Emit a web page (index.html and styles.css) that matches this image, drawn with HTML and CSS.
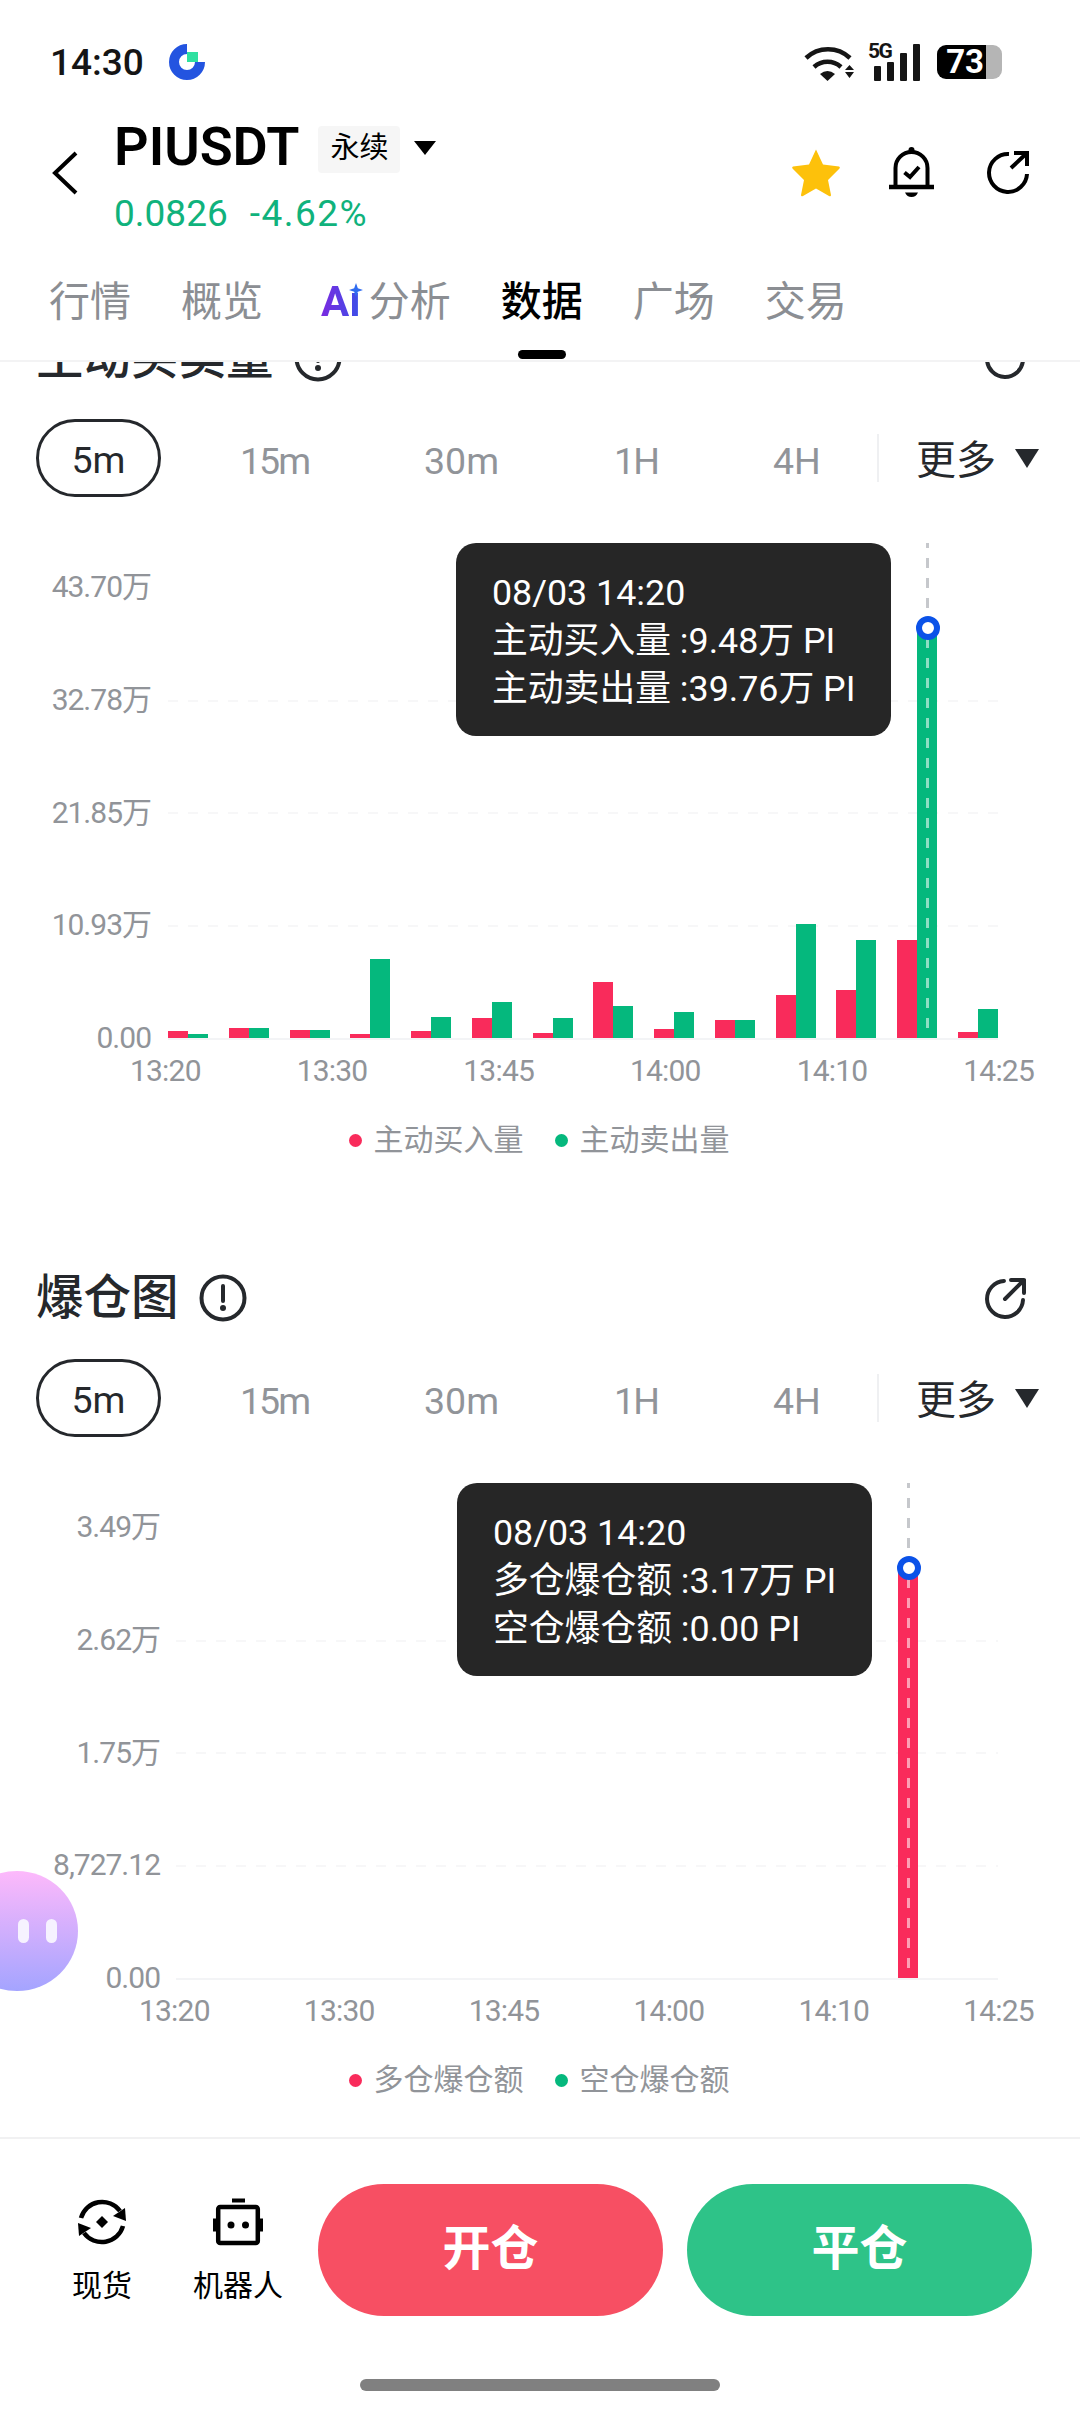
FILE: index.html
```html
<!DOCTYPE html>
<html lang="zh-CN">
<head>
<meta charset="utf-8">
<title>PIUSDT 数据</title>
<link rel="stylesheet" href="styles.css">
</head>
<body>
<div class="top">
  <div class="status">
    <span class="clock">14:30</span>
    <svg class="logo" width="36" height="36" viewBox="0 0 36 36"><path d="M18 5A13 13 0 1 0 31 18" fill="none" stroke="#2354e0" stroke-width="10"/><rect x="18" y="8" width="11" height="10" fill="#2fe0a0"/></svg>
    <div class="status-right">
      <svg width="50" height="38" viewBox="0 0 50 38"><path d="M2 15A32 32 0 0 1 46 15M10 24A20 20 0 0 1 37 24" fill="none" stroke="#151515" stroke-width="4.5"/><path d="M16 31Q23.5 25 31 31L23.5 38Z" fill="#151515"/><path d="M41 27L45.5 22L50 27ZM41 29H50L45.5 35Z" fill="#151515"/></svg>
      <div class="signal">
        <span class="five-g">5G</span>
        <svg width="46" height="37" viewBox="0 0 46 37"><rect y="22" width="7" height="15" rx="1"/><rect x="13" y="18" width="7" height="19" rx="1"/><rect x="26" y="9" width="7" height="28" rx="1"/><rect x="39" width="7" height="37" rx="1"/></svg>
      </div>
      <div class="battery"><span class="battery-level">73</span><span class="battery-rest"></span></div>
    </div>
  </div>
  <div class="head">
    <svg class="back" width="26" height="44" viewBox="0 0 26 44"><path d="M24 2L3 22L24 42" fill="none" stroke="#000" stroke-width="4"/></svg>
    <div class="pair">
      <div class="pair-name">
        <span class="symbol">PIUSDT</span>
        <span class="tag">永续</span>
        <i class="tri"></i>
      </div>
      <div class="quote"><span>0.0826</span><span class="change">-4.62%</span></div>
    </div>
    <div class="head-actions">
      <svg width="50" height="49" viewBox="0 0 50 49"><path d="M25 1.5L32 16.5L48 18.5Q49.5 19 48.5 20.5L37 32L40 47Q40 49 38 48L25 40.5L12 48Q10 49 10 47L13 32L1.500 20.500Q.5 19 2 18.500L18 16.500Z" fill="#fdc10b"/></svg>
      <svg width="45" height="50" viewBox="0 0 45 50"><circle cx="22.500" cy="3" r="3"/><path d="M6.500 40V21A16 16 0 0 1 38.500 21V40" fill="none" stroke="#000" stroke-width="4"/><path d="M0 40H45" stroke="#000" stroke-width="4.500"/><path d="M16 45.500H29Q27 50 22.500 50Q18 50 16 45.500Z"/><path d="M15.500 25.500L21 30L30 20" fill="none" stroke="#000" stroke-width="4"/></svg>
      <svg class="head-share" width="44" height="44" viewBox="0 0 44 44"><path d="M23 4A19 19 0 1 0 41 24" fill="none" stroke="#000" stroke-width="4"/><path d="M28 3H41V16M41 3L25 18" fill="none" stroke="#000" stroke-width="4"/></svg>
    </div>
  </div>
  <div class="tabs">
    <span class="tab">行情</span>
    <span class="tab">概览</span>
    <span class="tab tab-ai"><span class="ai-mark">Aı<svg class="ai-star" width="14" height="14" viewBox="0 0 13 13"><path d="M6.500 0L8.200 4.800L13 6.500L8.200 8.200L6.500 13L4.800 8.200L0 6.500L4.800 4.800Z"/></svg></span>分析</span>
    <span class="tab tab-on">数据</span>
    <span class="tab">广场</span>
    <span class="tab">交易</span>
  </div>
</div>

<div class="main">
  <section class="block">
    <div class="block-title">
      <h2>主动买卖量</h2>
      <svg class="info" width="48" height="48" viewBox="0 0 48 48"><circle cx="24" cy="24" r="21.500" fill="none" stroke="#25282c" stroke-width="4"/><path d="M24 12V27" stroke="#25282c" stroke-width="4" stroke-linecap="round"/><circle cx="24" cy="34" r="3" fill="#25282c"/></svg>
      <svg class="expand" width="42" height="42" viewBox="0 0 42 42"><path d="M20 4A18 18 0 1 0 39 23" fill="none" stroke="#25282c" stroke-width="4" stroke-linecap="round"/><path d="M27 3H40V16M40 3L21 22" fill="none" stroke="#25282c" stroke-width="4" stroke-linecap="round" stroke-linejoin="round"/></svg>
    </div>
    <div class="ranges">
      <span class="range range-on">5m</span>
      <span class="range range-first range-one">15m</span>
      <span class="range">30m</span>
      <span class="range range-one">1H</span>
      <span class="range">4H</span>
      <div class="more"><span>更多</span><i class="tri tri-big"></i></div>
    </div>
    <div class="chart chart-a">
      <div class="chart-body">
        <div class="y-axis"><span>43.70万</span><span>32.78万</span><span>21.85万</span><span>10.93万</span><span>0.00</span></div>
        <div class="plot">
          <div class="group"><b class="buy" style="height:7px"></b><b class="sell" style="height:4px"></b></div>
          <div class="group"><b class="buy" style="height:10px"></b><b class="sell" style="height:10px"></b></div>
          <div class="group"><b class="buy" style="height:8px"></b><b class="sell" style="height:8px"></b></div>
          <div class="group"><b class="buy" style="height:4px"></b><b class="sell" style="height:79px"></b></div>
          <div class="group"><b class="buy" style="height:7px"></b><b class="sell" style="height:21px"></b></div>
          <div class="group"><b class="buy" style="height:20px"></b><b class="sell" style="height:36px"></b></div>
          <div class="group"><b class="buy" style="height:5px"></b><b class="sell" style="height:20px"></b></div>
          <div class="group"><b class="buy" style="height:56px"></b><b class="sell" style="height:32px"></b></div>
          <div class="group"><b class="buy" style="height:9px"></b><b class="sell" style="height:26px"></b></div>
          <div class="group"><b class="buy" style="height:18px"></b><b class="sell" style="height:18px"></b></div>
          <div class="group"><b class="buy" style="height:43px"></b><b class="sell" style="height:114px"></b></div>
          <div class="group"><b class="buy" style="height:48px"></b><b class="sell" style="height:98px"></b></div>
          <div class="group"><b class="buy" style="height:98px"></b><b class="sell" style="height:410px"></b></div>
          <div class="group"><b class="buy" style="height:6px"></b><b class="sell" style="height:29px"></b></div>
          <div class="cross"><i class="cross-top"></i><i class="cross-low"></i><i class="cross-dot"></i></div>
          <div class="tip">
            <div>08/03 14:20</div>
            <div>主动买入量 :9.48万 PI</div>
            <div>主动卖出量 :39.76万 PI</div>
          </div>
        </div>
      </div>
      <div class="x-axis"><span>13:20</span><span>13:30</span><span>13:45</span><span>14:00</span><span>14:10</span><span>14:25</span></div>
      <div class="legend"><span class="key key-buy">主动买入量</span><span class="key key-sell">主动卖出量</span></div>
    </div>
  </section>

  <section class="block">
    <div class="block-title">
      <h2>爆仓图</h2>
      <svg class="info" width="48" height="48" viewBox="0 0 48 48"><circle cx="24" cy="24" r="21.500" fill="none" stroke="#25282c" stroke-width="4"/><path d="M24 12V27" stroke="#25282c" stroke-width="4" stroke-linecap="round"/><circle cx="24" cy="34" r="3" fill="#25282c"/></svg>
      <svg class="expand" width="42" height="42" viewBox="0 0 42 42"><path d="M20 4A18 18 0 1 0 39 23" fill="none" stroke="#25282c" stroke-width="4" stroke-linecap="round"/><path d="M27 3H40V16M40 3L21 22" fill="none" stroke="#25282c" stroke-width="4" stroke-linecap="round" stroke-linejoin="round"/></svg>
    </div>
    <div class="ranges">
      <span class="range range-on">5m</span>
      <span class="range range-first range-one">15m</span>
      <span class="range">30m</span>
      <span class="range range-one">1H</span>
      <span class="range">4H</span>
      <div class="more"><span>更多</span><i class="tri tri-big"></i></div>
    </div>
    <div class="chart chart-b">
      <div class="chart-body">
        <div class="y-axis"><span>3.49万</span><span>2.62万</span><span>1.75万</span><span>8,727.12</span><span>0.00</span></div>
        <div class="plot">
          <div class="group"></div><div class="group"></div><div class="group"></div><div class="group"></div>
          <div class="group"></div><div class="group"></div><div class="group"></div><div class="group"></div>
          <div class="group"></div><div class="group"></div><div class="group"></div><div class="group"></div>
          <div class="group"><b class="buy" style="height:409px"></b></div>
          <div class="group"></div>
          <div class="cross"><i class="cross-top"></i><i class="cross-low"></i><i class="cross-dot"></i></div>
          <div class="tip">
            <div>08/03 14:20</div>
            <div>多仓爆仓额 :3.17万 PI</div>
            <div>空仓爆仓额 :0.00 PI</div>
          </div>
        </div>
      </div>
      <div class="x-axis"><span>13:20</span><span>13:30</span><span>13:45</span><span>14:00</span><span>14:10</span><span>14:25</span></div>
      <div class="legend"><span class="key key-buy">多仓爆仓额</span><span class="key key-sell">空仓爆仓额</span></div>
    </div>
  </section>
</div>

<div class="bottom">
  <div class="bottom-row">
    <div class="side">
      <svg width="50" height="50" viewBox="0 0 50 50"><path d="M4 21A22 22 0 0 1 43 14" fill="none" stroke="#000" stroke-width="4.500"/><path d="M36 19L49 24L48 11Z"/><path d="M46 29A22 22 0 0 1 7 36" fill="none" stroke="#000" stroke-width="4.500"/><path d="M14 31L1 26L2 39Z"/><path d="M25 19L31 25L25 31L19 25Z"/></svg>
      <span>现货</span>
    </div>
    <div class="side">
      <svg width="50" height="50" viewBox="0 0 50 47"><rect x="19" width="13" height="4"/><rect x="5.200" y="8.500" width="39.600" height="36" rx="2" fill="none" stroke="#000" stroke-width="4.500"/><rect y="20" width="4" height="13"/><rect x="46" y="20" width="4" height="13"/><circle cx="18" cy="26.500" r="3.500"/><circle cx="32.500" cy="26.500" r="3.500"/></svg>
      <span>机器人</span>
    </div>
    <div class="trade trade-open">开仓</div>
    <div class="trade trade-close">平仓</div>
  </div>
  <div class="home-bar"></div>
</div>

<div class="float-bot"><i></i><i></i></div>
</body>
</html>
```

FILE: styles.css
```css
*{box-sizing:border-box;margin:0;padding:0;}
html,body{width:1080px;height:2412px;overflow:hidden;}
body{position:relative;display:flex;flex-direction:column;background:#fff;color:#000;font-family:Roboto,"Noto Sans CJK SC",sans-serif;}
i{display:block;font-style:normal;}

/* top area */
.top{position:relative;z-index:2;flex:none;background:#fff;padding-bottom:1px;border-bottom:2px solid #f3f3f4;}
.status{display:flex;align-items:center;height:36px;margin-top:44px;padding:0 78px 0 50px;}
.clock{font-size:37px;font-weight:500;color:#151515;}
.logo{margin-left:25px;}
.status-right{display:flex;align-items:center;margin-left:auto;}
.signal{position:relative;margin-left:20px;width:46px;height:37px;}
.five-g{position:absolute;left:-6px;top:-3px;font-size:21px;line-height:20px;font-weight:700;color:#151515;letter-spacing:-1.500px;}
.signal svg{position:absolute;left:0;top:0;fill:#151515;}
.battery{display:flex;margin-left:17px;height:34px;}
.battery-level{width:49px;background:#000;border-radius:9px 0 0 9px;color:#fff;font-size:33px;line-height:34px;font-weight:700;text-align:right;padding-right:2px;}
.battery-rest{width:16px;background:#b5b5b5;border-radius:0 9px 9px 0;}

.head{display:flex;align-items:flex-start;padding:46px 50px 0 52px;}
.back{margin-top:25px;}
.pair{margin-left:36px;}
.pair-name{display:flex;align-items:center;height:47px;}
.symbol{margin-top:-6px;font-size:54px;font-weight:600;line-height:47px;}
.tag{margin-left:19px;width:82px;height:47px;background:#f6f6f6;border-radius:4px;font-size:29px;line-height:45px;text-align:center;}
.tri{width:0;height:0;border-style:solid;border-width:14px 11px 0;border-color:#000 transparent transparent;margin-left:14px;margin-top:-3px;}
.tri-big{border-width:19px 12.500px 0;border-top-color:#25282c;margin:0 0 0 19px;}
.quote{display:flex;gap:22px;margin-top:19px;height:44px;font-size:37px;line-height:44px;color:#10b27c;}
.change{letter-spacing:1.500px;}
.head-actions{display:flex;align-items:center;gap:48px;margin-left:auto;margin-top:20px;height:52px;}
.head-share{margin-left:4px;}

.tabs{display:flex;gap:50px;height:88px;margin-top:35px;padding-left:49px;}
.tab{position:relative;display:flex;height:88px;font-size:41px;line-height:62px;color:#8b8e93;}
.tab-ai{margin-left:8px;}
.tab-on{color:#000;font-weight:500;}
.tab-on::after{content:"";position:absolute;left:17px;bottom:0;width:48px;height:9px;border-radius:5px;background:#000;}
.ai-mark{position:relative;margin-right:8px;font-size:42px;font-weight:700;background:linear-gradient(90deg,#7b2ae0,#3a50e8);-webkit-background-clip:text;background-clip:text;color:transparent;}
.ai-star{position:absolute;right:-2px;top:12px;fill:#2f6bf0;}

/* sections */
.main{flex:1;min-height:0;overflow:hidden;}
.block{height:940px;}
.block:first-child{margin-top:-35px;}
.block-title{display:flex;align-items:center;height:60px;padding:2px 54px 0 36px;}
.block-title h2{font-size:47.500px;font-weight:500;color:#25282c;line-height:58px;}
.info{margin-left:20px;}
.expand{margin-left:auto;}

.ranges{display:flex;align-items:center;height:78px;margin-top:32px;padding:0 41px 0 36px;font-size:37.500px;color:#919499;}
.range{height:78px;padding-top:5px;line-height:75px;margin-right:115px;}
.range:nth-child(5){margin-right:0;}
.range-one{letter-spacing:-2px;}
.range-first{margin-left:-36px;}
.range-on{width:125px;margin-right:115px;padding-top:3px;border:3px solid #25282c;border-radius:39px;color:#25282c;text-align:center;line-height:71px;}
.more{display:flex;align-items:center;height:48px;margin-left:auto;padding-left:37px;border-left:2px solid #eff0f2;color:#25282c;font-size:40px;}
.more span{margin-top:-2px;}

.chart{margin-top:46px;}
.chart-body{display:flex;align-items:flex-start;height:497px;}
.y-axis{display:flex;flex-direction:column;justify-content:space-between;flex:none;height:487px;margin-top:26px;text-align:right;font-size:30px;line-height:36px;letter-spacing:-1px;color:#919499;}
.chart-a .y-axis{width:151px;margin-right:17px;}
.chart-b .y-axis{width:160px;margin-right:16px;}
.plot{position:relative;display:flex;justify-content:space-between;align-items:flex-end;height:497px;border-bottom:2px solid #f3f4f6;
	background-image:repeating-linear-gradient(90deg,#f7f7f8 0 10px,transparent 10px 20px),repeating-linear-gradient(90deg,#f7f7f8 0 10px,transparent 10px 20px),repeating-linear-gradient(90deg,#f7f7f8 0 10px,transparent 10px 20px);
	background-repeat:no-repeat;background-size:100% 2px;background-position:0 382px,0 269px,0 157px;}
.chart-a .plot{width:830px;}
.chart-b .plot{width:822px;}
.group{display:flex;align-items:flex-end;flex:none;width:40px;}
.buy,.sell{display:block;width:20px;}
.buy{background:#f92b5b;}
.sell{background:#05b87d;}

.cross{position:absolute;top:0;bottom:0;width:3px;}
.chart-a .cross{left:758px;}
.chart-b .cross{left:731px;}
.cross-top,.cross-low{position:absolute;left:0;width:3px;}
.cross-top{top:0;height:76px;background:repeating-linear-gradient(180deg,#c6c8cc 0 5px,transparent 5px 15px,#c6c8cc 15px 20px);}
.cross-low{top:95px;bottom:0;background:repeating-linear-gradient(180deg,rgba(255,255,255,.55) 0 10px,transparent 10px 20px);}
.cross-dot{position:absolute;left:-10.500px;top:73px;width:24px;height:24px;border:6.500px solid #0b52e8;border-radius:50%;background:#fff;}

.tip{position:absolute;top:0;height:193px;padding:26px 0 0 36px;background:#262626;border-radius:20px;color:#fff;font-size:35.800px;line-height:48px;white-space:nowrap;}
.chart-a .tip{left:288px;width:435px;}
.chart-b .tip{left:281px;width:415px;}

.x-axis{display:flex;justify-content:space-between;height:36px;margin-top:13px;font-size:30px;line-height:36px;letter-spacing:-.8px;color:#919499;}
.chart-a .x-axis{margin-left:130px;width:904px;}
.chart-b .x-axis{margin-left:139px;width:895px;}
.legend{display:flex;justify-content:center;gap:31px;height:36px;margin:33px 0 0 -2px;font-size:30px;line-height:36px;color:#919499;}
.key{display:flex;align-items:center;gap:12px;}
.key::before{content:"";width:13px;height:13px;border-radius:50%;}
.key-buy::before{background:#f92b5b;}
.key-sell::before{background:#05b87d;}

/* bottom bar */
.bottom{flex:none;height:275px;border-top:2px solid #f1f1f2;background:#fff;}
.bottom-row{display:flex;align-items:flex-start;gap:24px;height:132px;margin-top:45px;padding-left:318px;position:relative;}
.side{position:absolute;top:13px;display:flex;flex-direction:column;align-items:center;width:100px;font-size:30px;line-height:36px;}
.side:nth-child(1){left:52px;}
.side:nth-child(2){left:188px;}
.side span{margin-top:21px;white-space:nowrap;}
.trade{width:345px;height:132px;border-radius:66px;color:#fff;font-size:48px;font-weight:700;line-height:130px;text-align:center;}
.trade-open{background:#f74f63;}
.trade-close{background:#2ec388;}
.home-bar{width:360px;height:12px;margin:63px auto 0;border-radius:6px;background:#808080;}

/* floating helper on the left edge */
.float-bot{position:absolute;left:-44px;top:1871px;display:flex;justify-content:flex-end;align-items:center;gap:17px;width:122px;height:120px;padding-right:21px;border-radius:50%;background:linear-gradient(180deg,#fdb9fb,#a4a4ff);}
.float-bot i{width:11px;height:24px;border-radius:6px;background:#f6f2ff;}
```
